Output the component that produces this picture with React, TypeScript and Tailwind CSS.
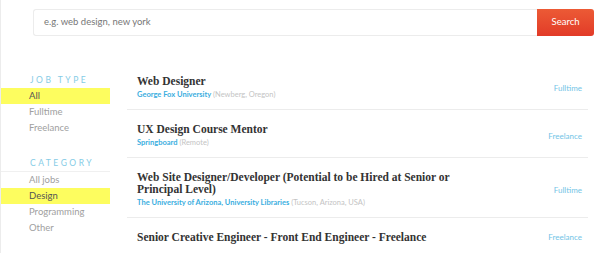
const jobTypes = ["All", "Fulltime", "Freelance"];
const categories = ["All jobs", "Design", "Programming", "Other"];

interface Job {
  title: string;
  company: string;
  location: string;
  type: string;
}

const jobs: Job[] = [
  { title: "Web Designer", company: "George Fox University", location: "(Newberg, Oregon)", type: "Fulltime" },
  { title: "UX Design Course Mentor", company: "Springboard", location: "(Remote)", type: "Freelance" },
  {
    title: "Web Site Designer/Developer (Potential to be Hired at Senior or Principal Level)",
    company: "The University of Arizona, University Libraries",
    location: "(Tucson, Arizona, USA)",
    type: "Fulltime",
  },
  { title: "Senior Creative Engineer - Front End Engineer - Freelance", company: "", location: "", type: "Freelance" },
];

function FilterGroup({ title, items, active, divider }: { title: string; items: string[]; active: string; divider?: boolean }) {
  return (
    <div>
      <div className={`pl-[29px] h-[16px] flex items-center text-[8.5px] tracking-[2.5px] text-[#86cce6] ${divider ? "border-b border-[#f0f0f0] h-[15px]" : ""}`}>
        {title}
      </div>
      <ul>
        {items.map((item) => (
          <li
            key={item}
            className={`h-[16px] pl-[28px] flex items-center text-[9.5px] ${
              item === active ? "bg-[#fdfd5f] text-[#555]" : "text-[#a0a0a0]"
            }`}
          >
            {item}
          </li>
        ))}
      </ul>
    </div>
  );
}

export default function App() {
  return (
    <div className="w-[600px] h-[253px] overflow-hidden bg-white border-l border-[#ececec] font-['Lato',sans-serif]">
      <div className="flex pl-[32px] pr-[6px] pt-[9px]">
        <div className="flex-1 h-[27px] border border-[#ececec] border-r-0 rounded-l-[3px] flex items-center pl-[10px] text-[9.5px] text-[#777]">
          e.g. web design, new york
        </div>
        <button className="w-[57px] h-[27px] rounded-r-[3px] bg-gradient-to-b from-[#ec5a35] to-[#e23a28] text-white text-[9.5px]">
          Search
        </button>
      </div>

      <div className="flex mt-[26px]">
        <aside className="w-[109px] shrink-0 pt-[10px]">
          <FilterGroup title="JOB TYPE" items={jobTypes} active="All" />
          <div className="h-[20px]" />
          <FilterGroup title="CATEGORY" items={categories} active="Design" divider />
        </aside>

        <main className="ml-[17px] w-[461px]">
          {jobs.map((job, i) => (
            <div
              key={i}
              className={`flex items-center pl-[10px] pr-[6px] pt-[13px] pb-[9px] ${i < jobs.length - 1 ? "border-b border-[#ececec]" : ""}`}
            >
              <div className="w-[322px]">
                <h3 className="font-['Liberation_Serif',serif] font-bold text-[11.5px] leading-[12px] text-[#333]">
                  {job.title}
                </h3>
                {job.company && (
                  <div className="mt-[3px] text-[7.5px] leading-[10px]">
                    <span className="font-bold text-[#3aaee0]">{job.company}</span>{" "}
                    <span className="text-[#c4c4c4]">{job.location}</span>
                  </div>
                )}
              </div>
              <div className="flex-1 text-right text-[8px] text-[#72c4e6]">{job.type}</div>
            </div>
          ))}
        </main>
      </div>
    </div>
  );
}
